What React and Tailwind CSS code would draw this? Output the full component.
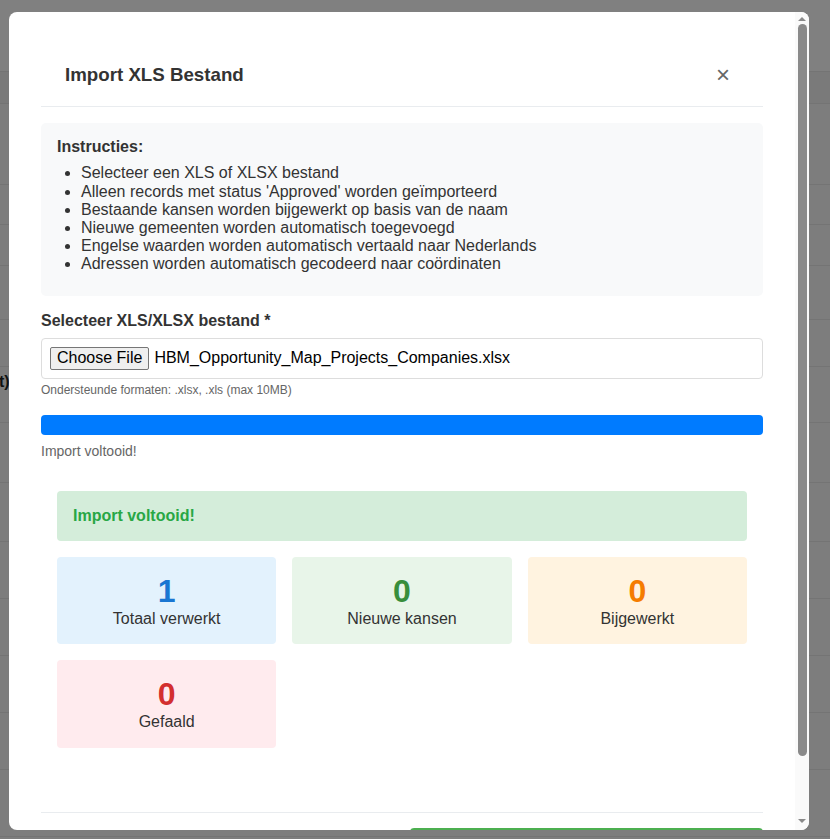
import React from "react";

/* background rows of the page behind the overlay */
const bgRows = [72, 32, 81, 40, 41, 54, 47, 56, 60, 59, 57, 57, 57, 57, 67];

const instructions = [
  "Selecteer een XLS of XLSX bestand",
  "Alleen records met status 'Approved' worden geïmporteerd",
  "Bestaande kansen worden bijgewerkt op basis van de naam",
  "Nieuwe gemeenten worden automatisch toegevoegd",
  "Engelse waarden worden automatisch vertaald naar Nederlands",
  "Adressen worden automatisch gecodeerd naar coördinaten",
];

const stats = [
  { value: 1, label: "Totaal verwerkt", box: "bg-[#e3f2fd]", num: "text-[#1976d2]" },
  { value: 0, label: "Nieuwe kansen", box: "bg-[#e8f5e9]", num: "text-[#388e3c]" },
  { value: 0, label: "Bijgewerkt", box: "bg-[#fff3e0]", num: "text-[#f57c00]" },
  { value: 0, label: "Gefaald", box: "bg-[#ffebee]", num: "text-[#d32f2f]" },
];

export default function App() {
  return (
    <div className="relative h-[839px] w-[830px] overflow-hidden bg-[#7d7d7d] font-['Liberation_Sans',Arial,sans-serif] text-[16px] leading-[1.15] text-[#333]">
      {/* page behind */}
      <div className="flex flex-col">
        {bgRows.map((h, i) => (
          <div
            key={i}
            style={{ height: h }}
            className={`flex items-start border-b border-[#747474] ${
              i === 0 ? "bg-[#808080]" : i === 1 ? "bg-[#7a7a7a]" : ""
            }`}
          >
            {i === 7 && (
              <span className="-ml-[1px] pt-[6px] text-[16px] font-bold text-[#111]">t)</span>
            )}
          </div>
        ))}
      </div>

      {/* modal */}
      <div className="absolute left-[9px] top-[12px] flex h-[818px] w-[800px] overflow-hidden rounded-lg bg-white">
        <div className="flex-1 overflow-hidden px-8 pt-8">
          {/* header */}
          <div className="flex items-center justify-between border-b border-[#e9ecef] py-[19px] pl-6 pr-[33px]">
            <h3 className="text-[18.72px] font-bold">Import XLS Bestand</h3>
            <button className="text-[24px] leading-none text-[#666]">×</button>
          </div>

          {/* instructions */}
          <div className="mt-[16px] rounded-[5px] bg-[#f8f9fa] px-4 pb-4 pt-[15px]">
            <strong className="block">Instructies:</strong>
            <ul className="mb-[6px] mt-2 list-disc pl-6 leading-[18.2px]">
              {instructions.map((t) => (
                <li key={t}>{t}</li>
              ))}
            </ul>
          </div>

          {/* file */}
          <div className="mt-4">
            <label className="mb-2 block font-bold">Selecteer XLS/XLSX bestand *</label>
            <div className="flex items-center gap-[5px] rounded border border-[#ddd] p-2">
              <button className="h-[23px] rounded-[2px] border border-[#767676] bg-[#efefef] px-[6px] text-[#000]">
                Choose File
              </button>
              <span className="text-[#000]">HBM_Opportunity_Map_Projects_Companies.xlsx</span>
            </div>
            <p className="mt-[5px] text-[12px] text-[#666]">Ondersteunde formaten: .xlsx, .xls (max 10MB)</p>
          </div>

          {/* progress */}
          <div className="mt-[17px]">
            <div className="h-5 overflow-hidden rounded bg-[#e9ecef]">
              <div className="h-full w-full bg-[#007bff]"></div>
            </div>
            <p className="mt-2 text-[14px] text-[#666]">Import voltooid!</p>
          </div>

          {/* results */}
          <div className="mt-4 p-4">
            <div className="rounded bg-[#d4edda] p-4 font-bold text-[#28a745]">Import voltooid!</div>
            <div className="mt-4 grid grid-cols-3 gap-4">
              {stats.map((s) => (
                <div key={s.label} className={`rounded ${s.box} p-4 text-center`}>
                  <div className={`text-[32px] font-bold ${s.num}`}>{s.value}</div>
                  <div>{s.label}</div>
                </div>
              ))}
            </div>
          </div>

          {/* footer */}
          <div className="mt-12 flex justify-end gap-4 border-t border-[#e9ecef] pt-[15px]">
            <button className="h-10 w-[353px] rounded bg-[#4caf50]" aria-label="Importeren"></button>
          </div>
        </div>

        {/* scrollbar */}
        <div className="flex w-[14px] flex-col items-center bg-[#fafafa] py-[2px]">
          <svg width="10" height="8" viewBox="0 0 10 8" className="mt-[1px]">
            <path d="M1 6 L5 2 L9 6 Z" fill="#8a8a8a" />
          </svg>
          <div className="mt-[1px] h-[732px] w-[9px] rounded-full bg-[#8a8a8a]"></div>
          <div className="flex-1"></div>
          <svg width="10" height="8" viewBox="0 0 10 8" className="mb-[3px]">
            <path d="M1 2 L5 6 L9 2 Z" fill="#8a8a8a" />
          </svg>
        </div>
      </div>
    </div>
  );
}
